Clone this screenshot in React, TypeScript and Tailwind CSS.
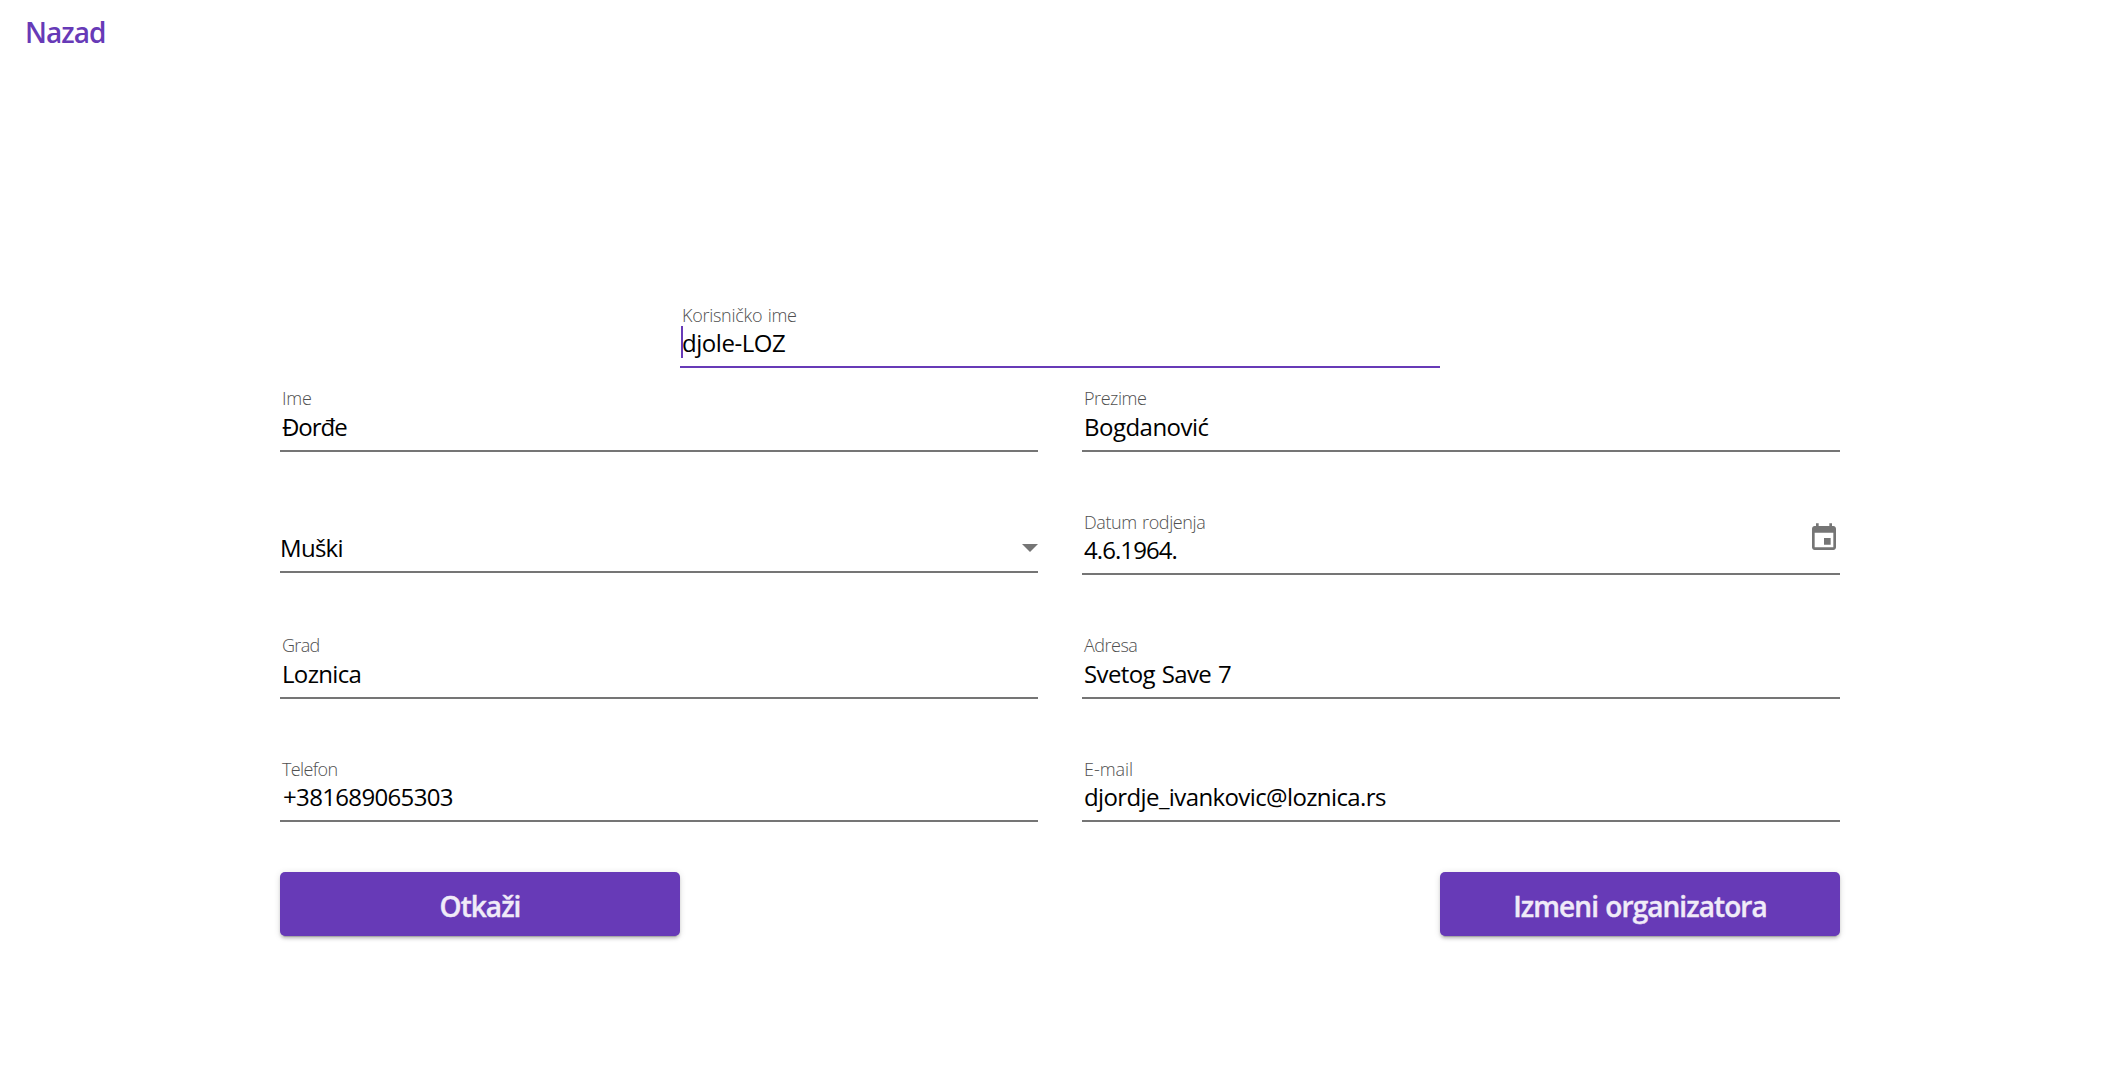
type FieldProps = {
  label: string;
  value: string;
  labelClass: string;
  valueClass: string;
  focused?: boolean;
  calendar?: boolean;
};

function CalendarIcon() {
  return (
    <svg viewBox="0 0 24 24" className="absolute right-0 bottom-[19px] size-8 fill-[#757575]">
      <path d="M17 12h-5v5h5v-5zM16 1v2H8V1H6v2H5c-1.11 0-1.99.9-1.99 2L3 19c0 1.1.89 2 2 2h14c1.1 0 2-.9 2-2V5c0-1.1-.9-2-2-2h-1V1h-2zm3 18H5V8h14v11z" />
    </svg>
  );
}

function Field({ label, value, labelClass, valueClass, focused, calendar }: FieldProps) {
  return (
    <div
      className={`relative flex h-16 flex-col justify-end border-b-2 pb-[7px] pl-[2px] whitespace-nowrap ${
        focused ? "border-[#673ab7]" : "border-[#757575]"
      }`}
    >
      <label className={`text-[18px] leading-5 font-light text-[#505050] [word-spacing:1px] ${labelClass}`}>{label}</label>
      <div className={`text-2xl leading-8 text-black ${valueClass}`}>{value}</div>
      {focused && <span className="absolute bottom-2 left-[1px] h-8 w-[2px] bg-[#673ab7]" />}
      {calendar && <CalendarIcon />}
    </div>
  );
}

function SelectField({ value }: { value: string }) {
  return (
    <div className="mb-[2px] flex h-16 items-end justify-between border-b-2 border-[#757575] pb-[7px]">
      <span className="text-2xl leading-8 tracking-[-0.71px] text-black">{value}</span>
      <svg viewBox="0 0 16 8" className="mb-[12px] h-2 w-4 fill-[#757575]">
        <path d="M0 0h16L8 8z" />
      </svg>
    </div>
  );
}

function Button({ children, textClass }: { children: string; textClass: string }) {
  return (
    <button
      type="button"
      className="flex h-16 w-[400px] items-center justify-center rounded-[5px] bg-[#673ab7] text-[28px] font-semibold text-[#f0ebf8] shadow-[0_4px_1px_-3px_rgba(0,0,0,0.2),0_3px_3px_0_rgba(0,0,0,0.14),0_1px_7px_0_rgba(0,0,0,0.12)] [-webkit-text-stroke:0.4px_#f0ebf8]"
    >
      <span className={`pt-1 ${textClass}`}>{children}</span>
    </button>
  );
}

export default function App() {
  return (
    <div className="min-h-screen bg-white font-['Open_Sans',sans-serif]">
      <header className="h-[304px] pt-[12px] pl-[25px]">
        <a className="text-[28px] leading-10 font-semibold tracking-[-0.95px] text-[#673ab7]">Nazad</a>
      </header>
      <form className="mx-auto w-[1560px]">
        <div className="mx-auto w-[760px]">
          <Field
            label="Korisničko ime"
            value="djole-LOZ"
            labelClass="mb-[2px] tracking-[-0.27px]"
            valueClass="tracking-[-0.45px]"
            focused
          />
        </div>
        <div className="mt-5 grid grid-cols-2 gap-x-11">
          <Field label="Ime" value="Đorđe" labelClass="mb-[3px] tracking-[-0.22px]" valueClass="tracking-[-1.05px]" />
          <Field label="Prezime" value="Bogdanović" labelClass="mb-[3px] tracking-[-0.45px]" valueClass="tracking-[-0.52px]" />
        </div>
        <div className="mt-[57px] grid grid-cols-2 items-end gap-x-11">
          <SelectField value="Muški" />
          <Field
            label="Datum rodjenja"
            value="4.6.1964."
            labelClass="mb-[2px] tracking-[-0.4px]"
            valueClass="tracking-[-0.93px]"
            calendar
          />
        </div>
        <div className="mt-[60px] grid grid-cols-2 gap-x-11">
          <Field label="Grad" value="Loznica" labelClass="mb-[3px] tracking-[-0.69px]" valueClass="tracking-[-0.66px]" />
          <Field
            label="Adresa"
            value="Svetog Save 7"
            labelClass="mb-[3px] tracking-[-0.5px]"
            valueClass="tracking-[-0.6px] [word-spacing:1px]"
          />
        </div>
        <div className="mt-[59px] grid grid-cols-2 gap-x-11">
          <Field
            label="Telefon"
            value="+381689065303"
            labelClass="mb-[2px] tracking-[-0.62px]"
            valueClass="pl-[1px] tracking-[-0.66px]"
          />
          <Field
            label="E-mail"
            value="djordje_ivankovic@loznica.rs"
            labelClass="mb-[2px] tracking-[-0.05px]"
            valueClass="tracking-[-0.61px]"
          />
        </div>
        <div className="mt-[50px] flex justify-between">
          <Button textClass="tracking-[-0.96px]">Otkaži</Button>
          <Button textClass="tracking-[-0.94px] [word-spacing:1px]">Izmeni organizatora</Button>
        </div>
      </form>
    </div>
  );
}
